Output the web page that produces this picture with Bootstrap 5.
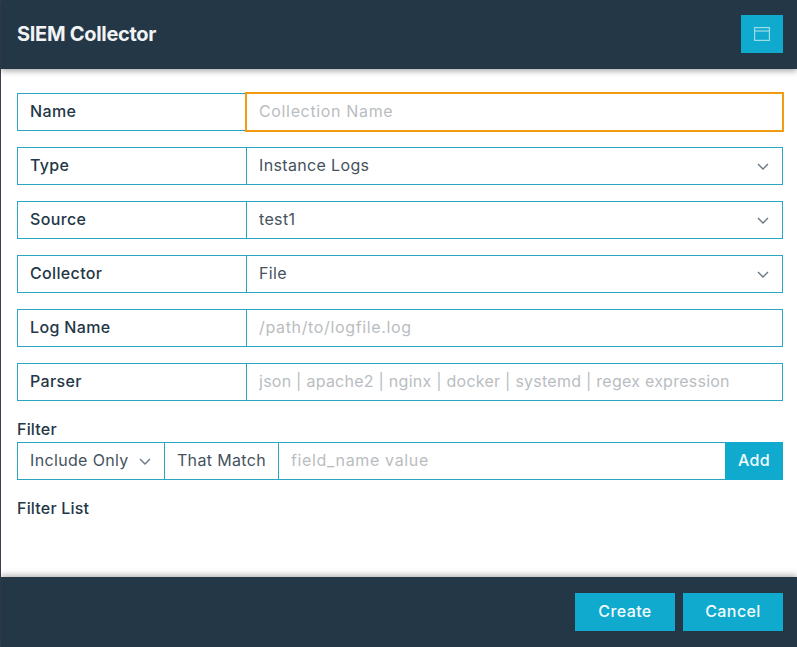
<!DOCTYPE html>
<html lang="en">
<head>
<meta charset="utf-8">
<title>SIEM Collector</title>
<link href="https://cdn.jsdelivr.net/npm/bootstrap@5.3.0/dist/css/bootstrap.min.css" rel="stylesheet">
<style>
html, body { height: 100%; }
body { background: #3a3f4f; font-family: "Inter", "Liberation Sans", sans-serif; color: #243746; overflow: hidden; }
.siem-shell { margin-left: 1px; height: 647px; background: #fff; display: flex; flex-direction: column; }
.siem-head { height: 69px; background: #243746; padding: 15px 14px 0 16px; box-shadow: 0 2px 6px rgba(0,0,0,.35); position: relative; flex: none; }
.siem-title { color: #f1f3f4; font-size: 20px; font-weight: 700; letter-spacing: -.3px; margin: 0; line-height: 38px; }
.siem-btn { background: #10aacf; color: #f2fbfd; border: 0; border-radius: 0; font-size: 16px; font-weight: 500; letter-spacing: .4px; }
.siem-btn:hover { background: #10aacf; color: #f2fbfd; }
.siem-icon-btn { width: 42px; height: 38px; padding: 0; display: flex; align-items: center; justify-content: center; }
.siem-body { flex: 1; padding: 24px 14px 0 16px; }
.siem-row { margin-bottom: 16px; height: 38px; flex-wrap: nowrap; }
.siem-row .input-group-text, .siem-filter .input-group-text { background: #fff; border: 1px solid #2aa5bf; border-radius: 0; color: #243746; font-size: 16px; letter-spacing: .35px; height: 38px; padding: 0 12px 2px; }
.siem-label { width: 230px; font-weight: 500; }
.siem-row .form-control, .siem-row .form-select, .siem-filter .form-control, .siem-filter .form-select { border: 1px solid #2aa5bf; border-radius: 0 !important; color: #46525e; font-size: 16px; letter-spacing: .35px; height: 38px; padding: 0 12px 2px; box-shadow: none; }
.siem-row .form-select, .siem-filter .form-select { padding-right: 36px; background-position: right 13px center; background-size: 12px 7px; background-image: url("data:image/svg+xml,%3Csvg xmlns='http://www.w3.org/2000/svg' viewBox='0 0 12 7'%3E%3Cpath fill='none' stroke='%236b7684' stroke-width='1.4' d='M1 1l5 5 5-5'/%3E%3C/svg%3E"); }
.siem-row .form-control::placeholder, .siem-filter .form-control::placeholder { color: #b9bdc1; letter-spacing: .65px; }
.siem-row .siem-tight::placeholder { letter-spacing: .25px; }
.siem-row .siem-focus { border-color: #f39c12; box-shadow: 0 0 0 1px #f39c12; position: relative; z-index: 3; }
.siem-caption { font-size: 16px; font-weight: 500; letter-spacing: .2px; line-height: 20px; color: #243746; margin: 0; }
.siem-caption-filter { padding-top: 2px; }
.siem-filter { margin-top: 3px; height: 38px; flex-wrap: nowrap; }
.siem-filter .form-select { flex: 0 0 148px; width: 148px; }
.siem-filter .input-group-text { width: 115px; color: #46525e; justify-content: center; }
.siem-filter .siem-btn { width: 58px; height: 38px; padding: 0 0 2px; }
.siem-caption-list { margin-top: 18px; }
.siem-foot { height: 70px; background: #243746; flex: none; display: flex; justify-content: flex-end; align-items: flex-start; gap: 8px; padding: 16px 14px 0 0; box-shadow: 0 -2px 6px rgba(0,0,0,.3); position: relative; }
.siem-foot .siem-btn { width: 100px; height: 38px; padding: 0 0 2px; }
</style>
</head>
<body>
<div class="siem-shell">
  <header class="siem-head d-flex justify-content-between align-items-start">
    <h1 class="siem-title">SIEM Collector</h1>
    <button type="button" class="btn siem-btn siem-icon-btn" aria-label="Maximize">
      <svg width="16" height="14" viewBox="0 0 16 14" fill="none" stroke="#9fdcea" stroke-width="1.2"><rect x=".6" y=".6" width="14.8" height="12.8"/><path d="M.6 4h14.8"/></svg>
    </button>
  </header>
  <main class="siem-body">
    <div class="input-group siem-row">
      <span class="input-group-text siem-label">Name</span>
      <input class="form-control siem-focus" placeholder="Collection Name">
    </div>
    <div class="input-group siem-row">
      <span class="input-group-text siem-label">Type</span>
      <select class="form-select"><option>Instance Logs</option></select>
    </div>
    <div class="input-group siem-row">
      <span class="input-group-text siem-label">Source</span>
      <select class="form-select"><option>test1</option></select>
    </div>
    <div class="input-group siem-row">
      <span class="input-group-text siem-label">Collector</span>
      <select class="form-select"><option>File</option></select>
    </div>
    <div class="input-group siem-row">
      <span class="input-group-text siem-label">Log Name</span>
      <input class="form-control" placeholder="/path/to/logfile.log">
    </div>
    <div class="input-group siem-row">
      <span class="input-group-text siem-label">Parser</span>
      <input class="form-control siem-tight" placeholder="json | apache2 | nginx | docker | systemd | regex expression">
    </div>
    <p class="siem-caption siem-caption-filter">Filter</p>
    <div class="input-group siem-filter">
      <select class="form-select"><option>Include Only</option></select>
      <span class="input-group-text">That Match</span>
      <input class="form-control" placeholder="field_name value">
      <button type="button" class="btn siem-btn">Add</button>
    </div>
    <p class="siem-caption siem-caption-list">Filter List</p>
  </main>
  <footer class="siem-foot">
    <button type="button" class="btn siem-btn">Create</button>
    <button type="button" class="btn siem-btn">Cancel</button>
  </footer>
</div>
<script src="https://cdn.jsdelivr.net/npm/bootstrap@5.3.0/dist/js/bootstrap.bundle.min.js"></script>
</body>
</html>
